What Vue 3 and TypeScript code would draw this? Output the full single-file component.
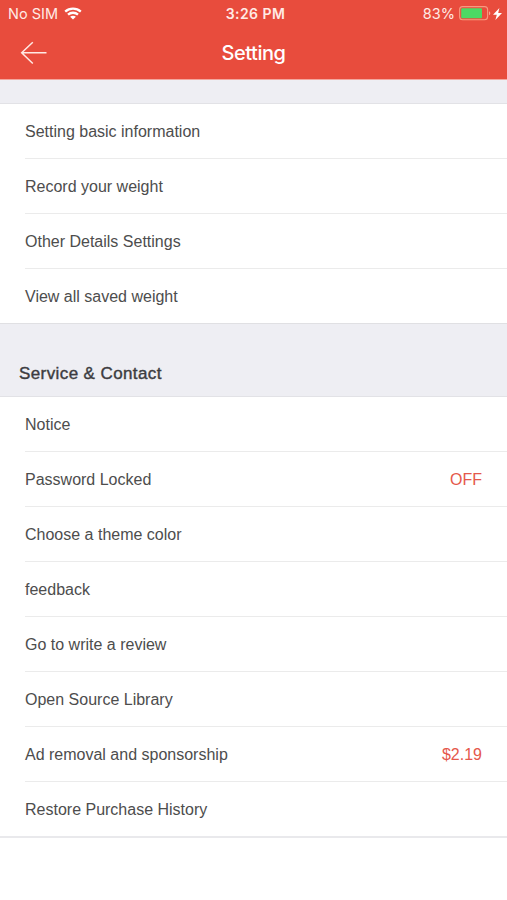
<script setup lang="ts">
interface Item {
  label: string
  value?: string
}

const general: Item[] = [
  { label: 'Setting basic information' },
  { label: 'Record your weight' },
  { label: 'Other Details Settings' },
  { label: 'View all saved weight' },
]

const service: Item[] = [
  { label: 'Notice' },
  { label: 'Password Locked', value: 'OFF' },
  { label: 'Choose a theme color' },
  { label: 'feedback' },
  { label: 'Go to write a review' },
  { label: 'Open Source Library' },
  { label: 'Ad removal and sponsorship', value: '$2.19' },
  { label: 'Restore Purchase History' },
]
</script>

<template>
  <main class="screen">
    <header class="header">
      <div class="status">
        <div class="status-left">
          <span class="carrier">No SIM</span>
          <svg class="wifi" width="18" height="13" viewBox="0 0 18 13" fill="none" stroke="#fff" stroke-width="2.3">
            <path d="M1.2 4.6C5.6.6 12.4.6 16.8 4.6" />
            <path d="M4 7.6C6.8 5.1 11.2 5.1 14 7.6" />
            <path d="M9 12.6L6.1 9.7C7.7 8.3 10.3 8.3 11.9 9.7Z" fill="#fff" stroke="none" />
          </svg>
        </div>
        <span class="time">3:26 PM</span>
        <div class="status-right">
          <span class="percent">83%</span>
          <svg class="battery" width="32" height="15" viewBox="0 0 32 15" fill="none">
            <rect x="0.6" y="0.6" width="28" height="13.2" rx="3" stroke="#f79a80" stroke-width="1.1" />
            <rect x="2.2" y="2.2" width="20.8" height="10" rx="1" fill="#4cd964" />
            <path d="M30 5.2C31.8 5.8 31.8 8.6 30 9.2Z" fill="#f6a392" />
          </svg>
          <svg class="bolt" width="9" height="12" viewBox="0 0 9 12">
            <path d="M6.4 0L0 6.8H3.8L2.4 12L9 4.9H5.2Z" fill="#fff" />
          </svg>
        </div>
      </div>
      <nav class="nav">
        <svg class="back" width="28" height="24" viewBox="0 0 28 24" fill="none" stroke="#ffe9e4" stroke-width="1.5">
          <path d="M12.8 1.2L1.7 11.7L12.8 22.5M1.7 11.7H26.5" />
        </svg>
        <h1 class="title">Setting</h1>
      </nav>
    </header>

    <div class="spacer"></div>
    <ul class="list">
      <li v-for="item in general" :key="item.label" class="row">
        <span>{{ item.label }}</span>
      </li>
    </ul>

    <h2 class="section">Service &amp; Contact</h2>
    <ul class="list last">
      <li v-for="item in service" :key="item.label" class="row">
        <span>{{ item.label }}</span>
        <span v-if="item.value" class="value">{{ item.value }}</span>
      </li>
    </ul>
  </main>
</template>

<style>
body {
  margin: 0;
  background: #fff;
}
</style>

<style scoped>
.screen {
  min-height: 900px;
  background: #fff;
  font-family: "Liberation Sans", Arial, sans-serif;
}
.header {
  box-sizing: border-box;
  height: 80px;
  background: #e84c3d;
  border-bottom: 1px solid #f3a69e;
  color: #fff;
  font-family: Inter, sans-serif;
}
.status {
  display: grid;
  grid-template-columns: 1fr auto 1fr;
  align-items: center;
  height: 27px;
  padding: 0 5px 0 8px;
  font-size: 14.5px;
  color: #ffeae5;
}
.status-left,
.status-right {
  display: flex;
  align-items: center;
}
.status-left {
  gap: 6px;
}
.status-right {
  justify-content: flex-end;
}
.time {
  padding-left: 1px;
  font-weight: 600;
  font-size: 14px;
  letter-spacing: 0.45px;
}
.battery {
  margin-left: 4px;
}
.bolt {
  margin-left: 2px;
}
.nav {
  display: grid;
  grid-template-columns: 1fr auto 1fr;
  align-items: center;
  height: 52px;
  padding: 0 20px;
}
.title {
  margin: 0;
  padding-top: 1px;
  font-size: 20px;
  line-height: 25px;
  font-weight: 500;
  letter-spacing: -0.45px;
}
.spacer {
  height: 23px;
  background: #eeeef3;
}
.list {
  margin: 0;
  padding: 0 0 0 25px;
  list-style: none;
  border-top: 1px solid #e2e2e6;
  border-bottom: 1px solid #e0e0e3;
  background: #fff;
}
.last {
  border-bottom: 2px solid #e9e9ec;
}
.row {
  box-sizing: border-box;
  display: flex;
  align-items: center;
  justify-content: space-between;
  height: 55px;
  padding: 2px 25px 0 0;
  border-bottom: 1px solid #ebebeb;
  font-size: 16px;
  color: #4d4d4d;
}
.row:last-child {
  height: 54px;
  border-bottom: 0;
}
.value {
  color: #e5584b;
}
.section {
  box-sizing: border-box;
  height: 73px;
  margin: 0;
  padding: 39px 0 0 19px;
  background: #eeeef3;
  color: #3c3c40;
  font-size: 17px;
  line-height: 22px;
  font-weight: 400;
  letter-spacing: 0.4px;
  -webkit-text-stroke: 0.4px #3c3c40;
}
.section + .last {
  margin-top: -1px;
}
</style>
